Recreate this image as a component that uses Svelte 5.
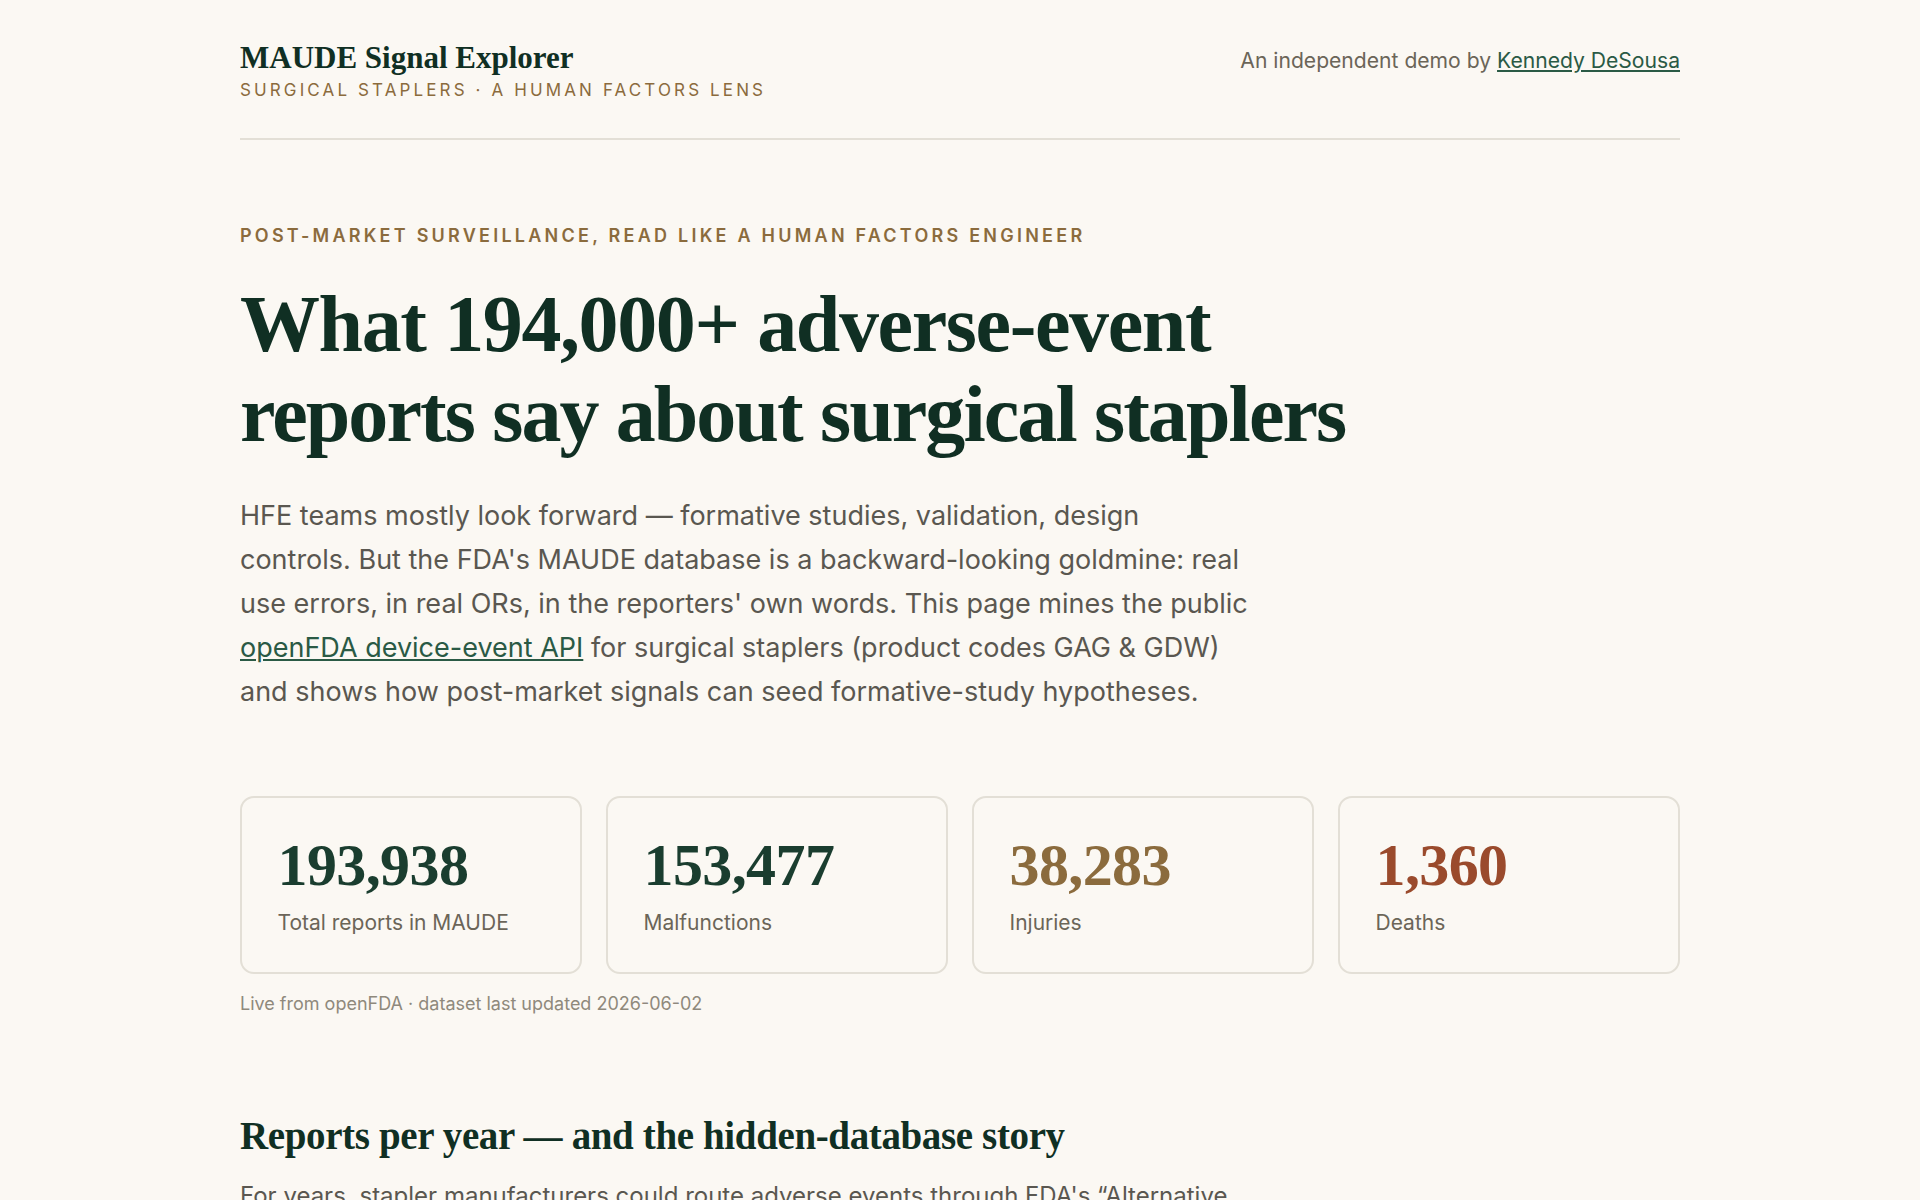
<script>
  const stats = [
    { value: '193,938', label: 'Total reports in MAUDE', tone: 'green' },
    { value: '153,477', label: 'Malfunctions', tone: 'green' },
    { value: '38,283', label: 'Injuries', tone: 'gold' },
    { value: '1,360', label: 'Deaths', tone: 'rust' }
  ];
</script>

<div class="page">
  <header class="top">
    <div>
      <div class="brand">MAUDE Signal Explorer</div>
      <div class="sub">SURGICAL STAPLERS · A HUMAN FACTORS LENS</div>
    </div>
    <div class="by">An independent demo by <a href="#top">Kennedy DeSousa</a></div>
  </header>

  <section class="hero">
    <div class="eyebrow">POST-MARKET SURVEILLANCE, READ LIKE A HUMAN FACTORS ENGINEER</div>
    <h1><span class="l1">What 194,000+ adverse-event</span><span class="l2">reports say about surgical staplers</span></h1>
    <p class="lead">HFE teams mostly look forward — formative studies, validation, design controls. But the FDA's MAUDE database is a backward-looking goldmine: real use errors, in real ORs, in the reporters' own words. This page mines the public <a href="#top">openFDA device-event API</a> for surgical staplers (product codes GAG &amp; GDW) and shows how post-market signals can seed formative-study hypotheses.</p>
  </section>

  <section class="stats">
    {#each stats as s}
      <div class="card">
        <div class="num {s.tone}">{s.value}</div>
        <div class="label">{s.label}</div>
      </div>
    {/each}
  </section>
  <div class="note">Live from openFDA · dataset last updated 2026-06-02</div>

  <section class="story">
    <h2>Reports per year — and the hidden-database story</h2>
    <p>For years, stapler manufacturers could route adverse events through FDA's “Alternative</p>
  </section>
</div>

<style>
  :global(html), :global(body) { margin: 0; background: #fbf8f3; overflow: hidden; }
  .page { box-sizing: border-box; width: 1440px; margin: 0 auto; font-family: Inter, "Liberation Sans", sans-serif; color: #5a5750; height: 1200px; overflow: hidden; }
  .top { display: flex; justify-content: space-between; align-items: flex-start; padding: 40px 0 30px; border-bottom: 2px solid #e3dfd6; height: 68px; }
  .brand { font-family: "Liberation Serif", serif; font-weight: 700; font-size: 31px; line-height: 36px; color: #102f23; }
  .sub { font-size: 17px; line-height: 22px; letter-spacing: 3.12px; color: #8b6b3d; margin-top: 3px; }
  .by { font-size: 21.12px; line-height: 42px; color: #6b6558; }
  a { color: #2a5a45; text-decoration: underline; }
  .hero { padding-top: 85px; }
  .eyebrow { font-size: 18px; line-height: 22px; font-weight: 600; letter-spacing: 3.24px; color: #8b6b3d; }
  h1 { margin: 32px 0 0; font-family: "Liberation Serif", serif; font-weight: 700; font-size: 80px; line-height: 90px; color: #102f23; }
  .l1, .l2 { display: block; white-space: nowrap; }
  .l1 { letter-spacing: -1.39px; }
  .l2 { letter-spacing: -1.9px; }
  .lead { margin: 35px 0 0; width: 1012px; font-size: 27px; line-height: 44.1px; color: #5a5750; }
  .stats { display: grid; grid-template-columns: repeat(4, 1fr); gap: 24px; margin-top: 82px; }
  .card { box-sizing: border-box; height: 178px; border: 2px solid #e3dfd6; border-radius: 14px; padding: 34px 35.5px; }
  .num { font-family: "Liberation Serif", serif; font-weight: 700; font-size: 60px; line-height: 66px; letter-spacing: -0.6px; }
  .green { color: #1a3d2f; } .gold { color: #8b6b3d; } .rust { color: #9a4a2c; }
  .label { font-size: 21px; line-height: 30px; margin-top: 10px; color: #6b6558; }
  .note { font-size: 18px; line-height: 24px; color: #8f897c; margin-top: 18px; }
  .story { padding-top: 96px; }
  h2 { margin: 0; font-family: "Liberation Serif", serif; font-weight: 700; font-size: 39px; line-height: 48px; letter-spacing: -0.37px; color: #102f23; }
  .story p { margin: 16px 0 0; font-size: 24px; line-height: 40px; }
</style>
